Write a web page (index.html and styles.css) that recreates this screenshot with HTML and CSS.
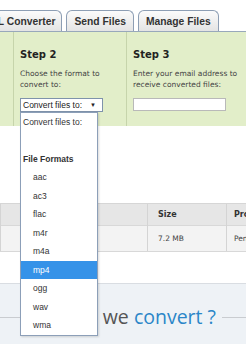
FILE: index.html
```html
<html>
<head>
<title>Convert Files</title>
<link rel="stylesheet" href="styles.css">
</head>
<body>

<div class="tabs">
  <div class="tab tab-first">URL Converter</div>
  <div class="tab">Send Files</div>
  <div class="tab">Manage Files</div>
</div>

<div class="steps">
  <div class="step step-edge"></div>
  <div class="step">
    <h2>Step 2</h2>
    <p>Choose the format to<br>convert to:</p>
    <div class="picker">
      <div class="select"><span>Convert files to:</span><span class="arrow">&#9660;</span></div>
      <ul class="options">
        <li>Convert files to:</li>
        <li></li>
        <li class="group">File Formats</li>
        <li class="opt">aac</li>
        <li class="opt">ac3</li>
        <li class="opt">flac</li>
        <li class="opt">m4r</li>
        <li class="opt">m4a</li>
        <li class="opt active">mp4</li>
        <li class="opt">ogg</li>
        <li class="opt">wav</li>
        <li class="opt">wma</li>
      </ul>
    </div>
  </div>
  <div class="step">
    <h2>Step 3</h2>
    <p>Enter your email address to<br>receive converted files:</p>
    <input class="email" type="text">
  </div>
</div>

<table class="files">
  <colgroup>
    <col class="col-name">
    <col class="col-size">
    <col class="col-state">
  </colgroup>
  <tr><th></th><th class="size">Size</th><th>Progress</th></tr>
  <tr><td></td><td class="size">7.2 MB</td><td>Pending</td></tr>
</table>

<div class="formats">
  <h3><span class="title"><span class="lead">What</span> we <span class="blue">convert ?</span></span></h3>
</div>

</body>
</html>
```

FILE: styles.css
```css
body {
  margin: 0;
  width: 246px;
  height: 344px;
  overflow: hidden;
  background: #fff;
  font-family: "DejaVu Sans", Verdana, sans-serif;
}

.tabs {
  display: flex;
  gap: 4px;
  padding-top: 10px;
  margin-left: -25px;
}

.tab {
  height: 20px;
  padding: 0 7px;
  border: 1px solid #8d9eb4;
  border-bottom: 0;
  border-radius: 6px 6px 0 0;
  background: linear-gradient(#fbfbfb, #e4e4e4);
  font: bold 10.3px/21px "Liberation Sans", Arial, sans-serif;
  color: #333;
  white-space: nowrap;
}

.tab-first {
  padding-right: 6px;
}

.steps {
  display: grid;
  grid-template-columns: 13px 113px 1fr;
  height: 94px;
  border-top: 1px solid #98a8bb;
  background: #e2eec9;
}

.step {
  border-left: 1px solid #c6d4ab;
  padding: 17px 0 0 6px;
}

.step-edge {
  border-left: 0;
}

.step h2 {
  margin: 0;
  font: bold 10px/12px "DejaVu Sans", Verdana, sans-serif;
  color: #222;
}

.step p {
  margin: 7px 0 0;
  font-size: 7.5px;
  line-height: 11px;
  color: #444;
}

.picker {
  position: relative;
  width: 83px;
  margin-top: 7.5px;
}

.select {
  display: flex;
  justify-content: space-between;
  height: 12px;
  padding: 0 6px 0 2px;
  border: 1px solid #7f93ab;
  background: #fff;
  font: 8.5px/12px "Liberation Sans", Arial, sans-serif;
  color: #222;
}

.arrow {
  font-size: 6px;
}

.options {
  position: absolute;
  top: 14px;
  left: 0;
  width: 76px;
  margin: 0;
  padding: 0;
  list-style: none;
  border: 1px solid #8c9fb8;
  background: #fff;
  box-shadow: 1px 1px 2px rgba(0, 0, 0, 0.15);
  font: 8.5px/18.5px "Liberation Sans", Arial, sans-serif;
  color: #333;
  z-index: 2;
}

.options li {
  height: 18.5px;
  padding-left: 2px;
}

.options .group {
  font-weight: bold;
}

.options .opt {
  padding-left: 12px;
}

.options .active {
  background: #3592e8;
  color: #fff;
}

.email {
  display: block;
  width: 93px;
  height: 13px;
  margin-top: 7.5px;
  padding: 0;
  border: 1px solid #b9b9b9;
  background: #fff;
}

.files {
  width: 330px;
  margin-top: 77px;
  border-collapse: collapse;
  table-layout: fixed;
  font-size: 7.5px;
  color: #444;
}

.col-name {
  width: 147px;
}

.col-size {
  width: 79px;
}

.files th,
.files td {
  padding: 0 0 0 7px;
  text-align: left;
  border-left: 1px solid #d4d4d4;
}

.files .size {
  padding-left: 10px;
}

.files th {
  height: 22px;
  background: #e6e6e6;
  border-top: 1px solid #d6d6d6;
  font-size: 8px;
  color: #333;
}

.files td {
  height: 26px;
  background: #f3f3f3;
  border-top: 1px solid #d8d8d8;
  border-bottom: 1px solid #d8d8d8;
}

.formats {
  height: 60px;
  margin-top: 31px;
  padding-top: 20px;
  border-top: 1px solid #d9dde2;
  background: #eef2f6;
}

.formats h3 {
  display: flex;
  align-items: center;
  margin: 0;
  font: 400 19.5px/26px "Open Sans", sans-serif;
  color: #555;
}

.formats h3::before {
  content: "";
  flex: 1;
  margin-right: 8px;
  border-top: 1px solid #c9ccd0;
}

.formats h3::after {
  content: "";
  width: 24px;
  margin-left: 6px;
  border-top: 1px solid #c9ccd0;
}

.lead {
  margin-right: 6px;
}

.blue {
  color: #2b86c8;
}
```
